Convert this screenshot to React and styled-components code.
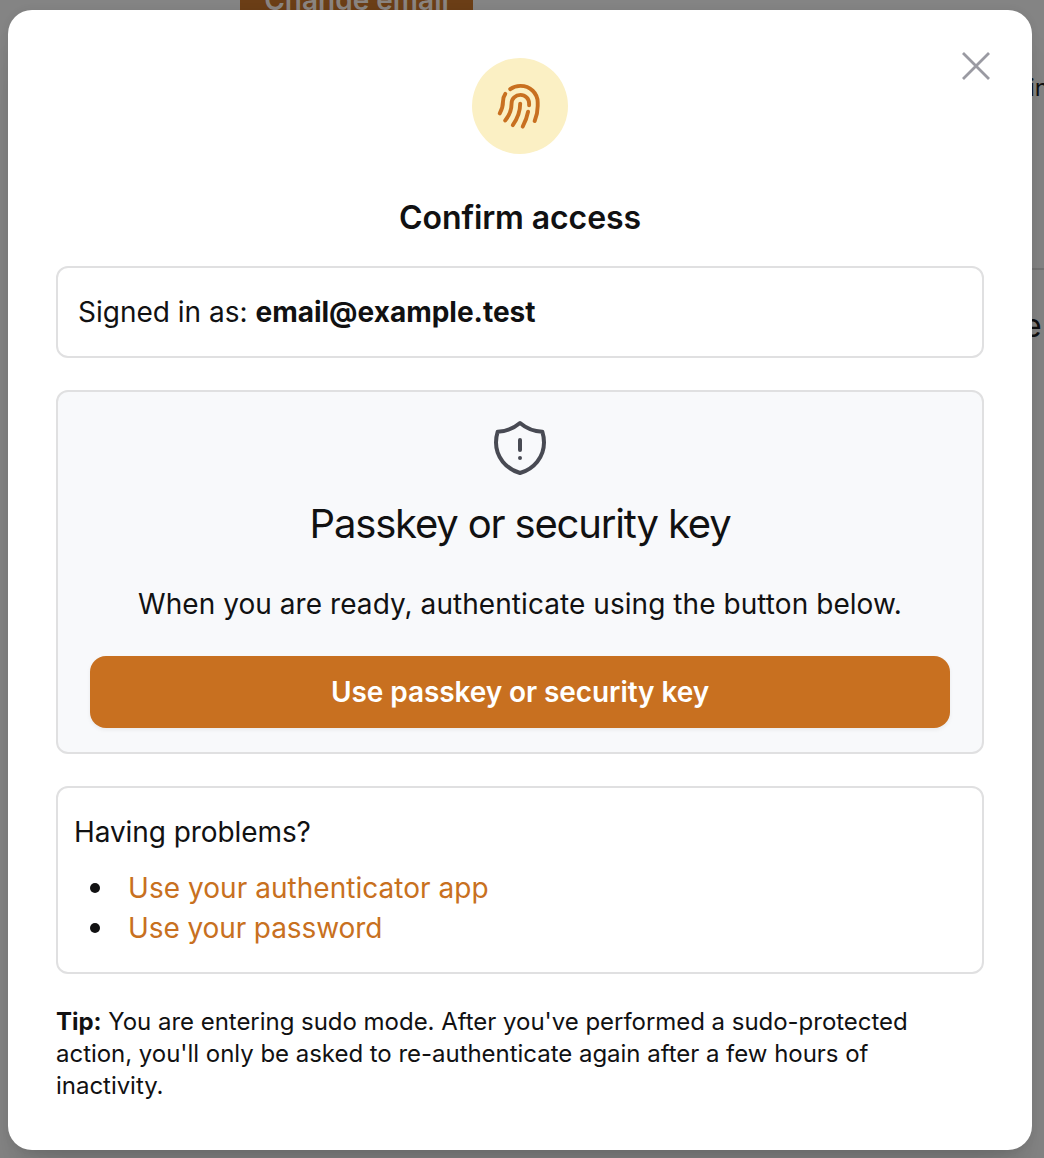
import React from "react";
import styled, { createGlobalStyle, css } from "styled-components";

const GlobalStyle = createGlobalStyle`
  *, *::before, *::after { box-sizing: border-box; }
  body {
    margin: 0;
    background: #848484;
    color: #111112;
    font-family: Inter, "Liberation Sans", sans-serif;
    font-size: 28px;
    line-height: 40px;
    overflow: hidden;
  }
`;

const Page = styled.div`
  position: relative;
  width: 1044px;
  height: 1158px;
  overflow: hidden;
`;

const Backdrop = styled.div`
  display: flex;
  flex-direction: column;
  height: 100%;
  background: #848484;
`;

const ChangeButton = styled.div`
  width: 233px;
  height: 44px;
  margin: -28px 0 0 240px;
  padding-top: 8px;
  background: #6b3e16;
  color: #8a8480;
  text-align: center;
  font-weight: 600;
  line-height: 40px;
  white-space: nowrap;
`;

const EdgeText = styled.div`
  align-self: flex-end;
  width: ${(p) => p.$width}px;
  height: ${(p) => p.$height}px;
  margin-top: ${(p) => p.$gap}px;
  font-size: ${(p) => p.$size}px;
  line-height: ${(p) => p.$height}px;
  white-space: nowrap;
`;

const Rule = styled.div`
  height: 2px;
  margin: 160px 0 0 240px;
  background: #747474;
`;

const Dialog = styled.section`
  position: absolute;
  inset: 10px 12px 8px 8px;
  display: flex;
  flex-direction: column;
  padding: 48px;
  border-radius: 24px;
  background: #fff;
  box-shadow: 0 40px 50px -10px rgba(0, 0, 0, 0.1), 0 16px 20px -12px rgba(0, 0, 0, 0.1),
    0 0 10px rgba(0, 0, 0, 0.06);
`;

const CloseButton = styled.button`
  position: absolute;
  top: 40px;
  right: 40px;
  display: flex;
  padding: 0;
  border: 0;
  background: none;
  color: #9a9aa2;
`;

const Badge = styled.div`
  display: grid;
  place-items: center;
  align-self: center;
  width: 96px;
  height: 96px;
  border-radius: 50%;
  background: #fbf0c4;
  color: #c87020;
`;

const Title = styled.h2`
  margin: 40px 0 24px;
  font-size: 32px;
  line-height: 48px;
  font-weight: 600;
  text-align: center;
  letter-spacing: -0.1px;
`;

const Card = styled.div`
  display: flex;
  flex-direction: column;
  margin-bottom: 32px;
  padding: 24px 16px;
  border: 2px solid #e0e0e1;
  border-radius: 12px;
  ${(p) =>
    p.$accent &&
    css`
      padding: 28px 32px 24px;
      align-items: center;
      background: #f8f9fb;
    `}
`;

const Account = styled.div`
  height: 40px;
  padding-left: 4px;
  white-space: nowrap;
`;

const Strong = styled.strong`
  font-weight: 700;
`;

const MethodTitle = styled.h3`
  margin: 20px 0 32px;
  font-size: 40px;
  line-height: 56px;
  font-weight: 400;
  letter-spacing: -1.17px;
  white-space: nowrap;
`;

const Text = styled.p`
  margin: 0;
  white-space: nowrap;
  letter-spacing: ${(p) => p.$tracking || 0}px;
`;

const PrimaryButton = styled.button`
  width: 100%;
  height: 72px;
  margin-top: 32px;
  padding: 0;
  border: 0;
  border-radius: 16px;
  background: #c87020;
  box-shadow: 0 2px 4px rgba(0, 0, 0, 0.06);
  color: #fff;
  font: inherit;
  font-weight: 600;
  letter-spacing: -0.08px;
`;

const Options = styled.ul`
  display: flex;
  flex-direction: column;
  margin: 16px 0 0;
  padding: 0;
  list-style: none;
`;

const Option = styled.li`
  display: flex;
  align-items: center;
  gap: 28px;
  height: 40px;
  padding-left: 16px;
  &::before {
    content: "";
    width: 10px;
    height: 10px;
    border-radius: 50%;
    background: #111112;
  }
`;

const Link = styled.a`
  color: #c87020;
  text-decoration: none;
  letter-spacing: ${(p) => p.$tracking || 0}px;
`;

const Tip = styled.p`
  margin: 0;
  padding-right: 16px;
  font-size: 24px;
  line-height: 32px;
  letter-spacing: -0.03px;
`;

const Fingerprint = () => (
  <svg width="48" height="48" viewBox="496 82 48 48" fill="none" stroke="currentColor" strokeWidth="3.9" strokeLinecap="round">
    <path d="M510.2 89.1C513 87 516.500 85.900 520.400 85.900C530.200 85.900 537.700 93.300 537.700 102.500V106C537.700 111.500 536.500 116.500 534.700 121" />
    <path d="M529.100 105.200V103.500C529.100 98.700 525.300 94.900 520.400 94.900C515.500 94.900 511.600 98.700 511.600 103.300C511.600 110.500 508.500 116.500 505.200 120.400" />
    <path d="M505.300 93.800C503.600 96.200 503 98.700 503 101.500C503 106 501.700 110 499.700 113.400" />
    <path d="M520.200 103.600C520.200 111.500 517.200 119 512.800 125.200" />
    <path d="M528.100 111.700C527.100 117 525.200 122 522.700 126.600" />
  </svg>
);

const Shield = () => (
  <svg width="56" height="56" viewBox="492 420 56 56" fill="none" stroke="#484a53" strokeLinecap="round" strokeLinejoin="round">
    <path strokeWidth="4" d="M520 423C513.500 428.500 506 431.500 497.700 431.700C496.500 435.500 496 439 496 442.500C496 457 506 469 520 473C534 469 544 457 544 442.500C544 439 543.500 435.500 542.300 431.700C534 431.500 526.500 428.500 520 423Z" />
    <path strokeWidth="4" d="M520 440V450M520 458V458.020" />
  </svg>
);

const Cross = () => (
  <svg width="32" height="32" viewBox="0 0 32 32" fill="none" stroke="currentColor" strokeWidth="2.8" strokeLinecap="butt">
    <path d="M3 3L29 29M29 3L3 29" />
  </svg>
);

export default function App() {
  return (
    <Page>
      <GlobalStyle />
      <Backdrop aria-hidden="true">
        <ChangeButton>Change email</ChangeButton>
        <EdgeText $width={15} $height={40} $gap={52} $size={24}>in</EdgeText>
        <Rule />
        <EdgeText $width={21} $height={40} $gap={36} $size={32}>e</EdgeText>
      </Backdrop>
      <Dialog role="dialog">
        <CloseButton aria-label="Close"><Cross /></CloseButton>
        <Badge><Fingerprint /></Badge>
        <Title>Confirm access</Title>
        <Card>
          <Account>Signed in as: <Strong>email@example.test</Strong></Account>
        </Card>
        <Card $accent>
          <Shield />
          <MethodTitle>Passkey or security key</MethodTitle>
          <Text $tracking={0.06}>When you are ready, authenticate using the button below.</Text>
          <PrimaryButton>Use passkey or security key</PrimaryButton>
        </Card>
        <Card>
          <Text $tracking={-0.08}>Having problems?</Text>
          <Options>
            <Option><Link $tracking={0.04}>Use your authenticator app</Link></Option>
            <Option><Link $tracking={-0.1}>Use your password</Link></Option>
          </Options>
        </Card>
        <Tip>
          <Strong>Tip:</Strong> You are entering sudo mode. After you've performed a sudo-protected action, you'll only be asked to re-authenticate again after a few hours of inactivity.
        </Tip>
      </Dialog>
    </Page>
  );
}
